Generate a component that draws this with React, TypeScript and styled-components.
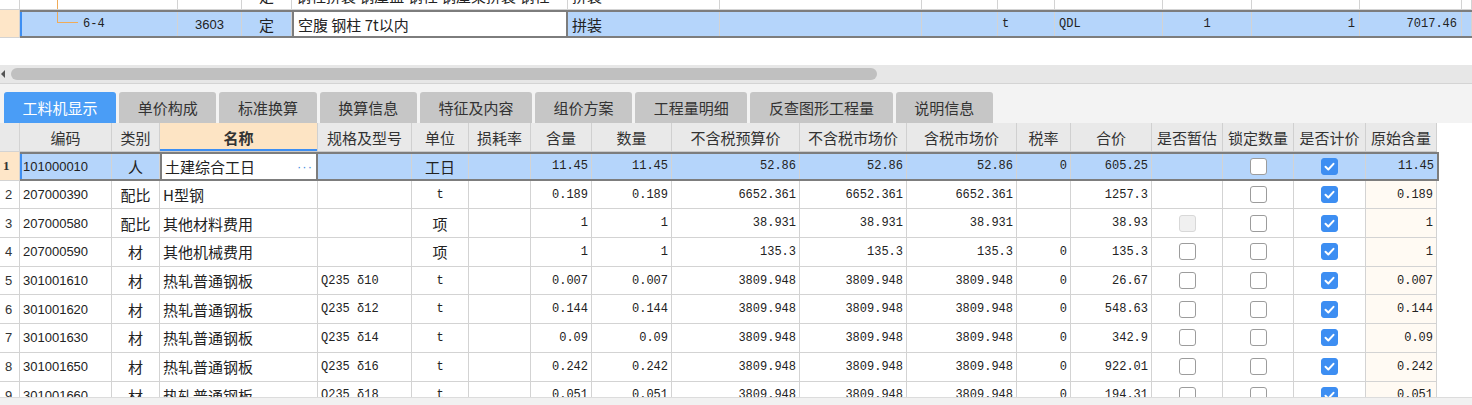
import React from "react";
import styled, { createGlobalStyle } from "styled-components";

const CJK = `"Noto Sans CJK SC", "Microsoft YaHei", sans-serif`;
const MONO = `"Liberation Mono", "Noto Sans CJK SC", monospace`;
const SANS = `"Liberation Sans", Arial, "Noto Sans CJK SC", sans-serif`;

const GRID_LINE = "#d3d3d3";
const SEL_BLUE = "#b5d5fb";
const SEL_BORDER = "#7d7d7d";
const ACCENT = "#3d8ef2";
const PEACH = "#fee6c8";

const GlobalStyle = createGlobalStyle`
  html, body {
    margin: 0;
    padding: 0;
    background: #fff;
    overflow: hidden;
  }
  * {
    box-sizing: border-box;
  }
`;

const Page = styled.div`
  width: 1472px;
  height: 405px;
  display: flex;
  flex-direction: column;
  overflow: hidden;
  background: #fff;
  color: #222;
`;

type Align = "left" | "center" | "right";
type Font = "cjk" | "mono" | "sans";

const fontOf = (f: Font) => (f === "cjk" ? CJK : f === "mono" ? MONO : SANS);
const sizeOf = (f: Font) => (f === "cjk" ? "15px" : f === "mono" ? "12px" : "13px");
const justify = (a: Align) =>
  a === "left" ? "flex-start" : a === "right" ? "flex-end" : "center";

const isAscii = (s: string) => /^[\x00-\x7f]*$/.test(s);

/* ---------- upper grid (list of items) ---------- */

const TOP_WIDTHS = [158, 64, 50, 276, 152, 202, 76, 57, 108, 89, 108, 102, 10];

const TopGrid = styled.div`
  height: 38px;
  display: flex;
  flex-direction: column;
  justify-content: flex-end;
  overflow: hidden;
  flex-shrink: 0;
`;

const TopRow = styled.div`
  display: flex;
  height: 28px;
  flex-shrink: 0;
`;

const RowHead = styled.div<{ $active?: boolean; $header?: boolean }>`
  width: 20px;
  flex-shrink: 0;
  background: ${(p) => (p.$header ? "#e9e9e9" : p.$active ? PEACH : "#fff")};
  border-right: 1px solid ${GRID_LINE};
  border-bottom: 1px solid ${GRID_LINE};
  display: flex;
  align-items: center;
  padding-left: ${(p) => (p.$active ? "3px" : "5px")};
  font-family: ${(p) => (p.$active ? `"Liberation Serif", serif` : SANS)};
  font-weight: ${(p) => (p.$active ? 700 : 400)};
  font-size: 13px;
  color: #333;
`;

const TopCells = styled.div<{ $selected?: boolean }>`
  flex: 1;
  display: grid;
  grid-template-columns: ${TOP_WIDTHS.map((w) => w + "px").join(" ")};
  background: ${(p) => (p.$selected ? SEL_BLUE : "#fff")};
  border-top: ${(p) => (p.$selected ? `2px solid ${SEL_BORDER}` : "none")};
  border-bottom: ${(p) => (p.$selected ? `2px solid ${SEL_BORDER}` : `1px solid ${GRID_LINE}`)};
  box-shadow: ${(p) => (p.$selected ? `inset 2px 0 0 ${ACCENT}` : "none")};
`;

const TopCell = styled.div<{ $align: Align; $font: Font; $editing?: boolean; $indent?: number }>`
  position: relative;
  display: flex;
  align-items: center;
  justify-content: ${(p) => justify(p.$align)};
  padding: 0 4px 0 ${(p) => (p.$indent ?? 4)}px;
  border-right: ${(p) => (p.$editing ? `2px solid ${SEL_BORDER}` : `1px solid ${GRID_LINE}`)};
  border-left: ${(p) => (p.$editing ? `2px solid ${SEL_BORDER}` : "none")};
  background: ${(p) => (p.$editing ? "#fff" : "transparent")};
  font-family: ${(p) => fontOf(p.$font)};
  font-size: ${(p) => sizeOf(p.$font)};
  white-space: nowrap;
  overflow: hidden;
  line-height: 1;
`;

const TreeLine = styled.span<{ $full?: boolean }>`
  position: absolute;
  left: 37px;
  top: 0;
  width: 21px;
  height: ${(p) => (p.$full ? "100%" : "11px")};
  border-left: 1px solid #f0ab58;
  border-bottom: ${(p) => (p.$full ? "none" : "1px solid #f0ab58")};
`;

const topPrev = ["", "", "定", "钢柱拼装 钢屋盖 钢柱 钢屋架拼装 钢柱", "拼装", "", "", "", "", "", "", "", ""];
const topSel = ["6-4", "3603", "定", "空腹 钢柱 7t以内", "拼装", "", "", "t", "QDL", "1", "1", "7017.46", ""];
const topAlign: Align[] = ["left", "center", "center", "left", "left", "left", "left", "left", "left", "center", "right", "right", "left"];

const TopRowView: React.FC<{ values: string[]; selected?: boolean }> = ({ values, selected }) => (
  <TopRow>
    <RowHead $active={selected} />
    <TopCells $selected={selected}>
      {values.map((v, i) => (
        <TopCell
          key={i}
          $align={topAlign[i]}
          $font={i === 1 ? "sans" : isAscii(v) ? "mono" : "cjk"}
          $editing={selected && i === 3}
          $indent={i === 0 ? 63 : undefined}
        >
          {i === 0 && <TreeLine $full={!selected} />}
          {v}
        </TopCell>
      ))}
    </TopCells>
  </TopRow>
);

/* ---------- horizontal scrollbar ---------- */

const ScrollGap = styled.div`
  height: 27px;
  flex-shrink: 0;
`;

const ScrollBar = styled.div`
  height: 18px;
  flex-shrink: 0;
  background: #e7e7e7;
  display: flex;
  align-items: center;
  padding-left: 1px;
  gap: 6px;
`;

const ArrowLeft = styled.span`
  width: 0;
  height: 0;
  border-top: 4px solid transparent;
  border-bottom: 4px solid transparent;
  border-right: 4px solid #555;
`;

const Thumb = styled.div`
  width: 866px;
  height: 12px;
  border-radius: 6px;
  background: #c0c0c0;
`;

/* ---------- tabs ---------- */

const TabBar = styled.div`
  height: 40px;
  flex-shrink: 0;
  background: #f3f3f3;
  border-top: 1px solid #d4d4d4;
  display: flex;
  align-items: flex-end;
  padding-left: 4px;
  gap: 3px;
`;

const Tab = styled.div<{ $active?: boolean }>`
  height: 31px;
  padding: 0 18.6px;
  border-radius: 3px 3px 0 0;
  background: ${(p) => (p.$active ? "#4a9df6" : "#c6c6c6")};
  color: ${(p) => (p.$active ? "#fff" : "#333")};
  font-family: ${CJK};
  font-size: 15px;
  display: flex;
  align-items: center;
  white-space: nowrap;
`;

const TABS = ["工料机显示", "单价构成", "标准换算", "换算信息", "特征及内容", "组价方案", "工程量明细", "反查图形工程量", "说明信息"];

/* ---------- detail grid ---------- */

const DETAIL_WIDTHS = [92, 48, 158, 94, 57, 62, 61, 80, 128, 107, 110, 54, 81, 71, 71, 72, 71];
const DETAIL_TEMPLATE = DETAIL_WIDTHS.map((w) => w + "px").join(" ");

const HEADERS = ["编码", "类别", "名称", "规格及型号", "单位", "损耗率", "含量", "数量", "不含税预算价", "不含税市场价", "含税市场价", "税率", "合价", "是否暂估", "锁定数量", "是否计价", "原始含量"];

const DetailArea = styled.div`
  flex: 1;
  min-height: 0;
  overflow: hidden;
  display: flex;
  flex-direction: column;
`;

const DetailRow = styled.div<{ $header?: boolean }>`
  display: flex;
  height: ${(p) => (p.$header ? "29px" : "28.7px")};
  flex-shrink: 0;
`;

const HeaderCells = styled.div`
  display: grid;
  grid-template-columns: ${DETAIL_TEMPLATE};
  background: #e9e9e9;
  border-bottom: 1px solid #c9c9c9;
`;

const HeaderCell = styled.div<{ $focus?: boolean }>`
  display: flex;
  align-items: center;
  justify-content: center;
  font-family: ${CJK};
  font-size: 15px;
  font-weight: ${(p) => (p.$focus ? 700 : 400)};
  color: #333;
  background: ${(p) => (p.$focus ? "#fde4c4" : "transparent")};
  box-shadow: ${(p) => (p.$focus ? `inset 0 -2px 0 ${ACCENT}` : "none")};
  border-right: 1px solid #d0d0d0;
  white-space: nowrap;
  overflow: hidden;
`;

const DataCells = styled.div<{ $selected?: boolean }>`
  display: grid;
  grid-template-columns: ${DETAIL_TEMPLATE};
  background: ${(p) => (p.$selected ? SEL_BLUE : "#fff")};
  border-top: ${(p) => (p.$selected ? `2px solid ${SEL_BORDER}` : "none")};
  border-bottom: ${(p) => (p.$selected ? `2px solid ${SEL_BORDER}` : `1px solid ${GRID_LINE}`)};
  border-right: ${(p) => (p.$selected ? `2px solid ${SEL_BORDER}` : "none")};
  box-shadow: ${(p) => (p.$selected ? `inset 2px 0 0 ${ACCENT}` : "none")};
`;

const DataCell = styled.div<{ $align: Align; $font: Font; $editing?: boolean; $tint?: boolean }>`
  display: flex;
  align-items: center;
  justify-content: ${(p) => justify(p.$align)};
  padding: 0 3px;
  border-right: ${(p) => (p.$editing ? `2px solid ${SEL_BORDER}` : `1px solid ${GRID_LINE}`)};
  border-left: ${(p) => (p.$editing ? `2px solid ${SEL_BORDER}` : "none")};
  background: ${(p) => (p.$editing ? "#fff" : p.$tint ? "#fffaf3" : "transparent")};
  font-family: ${(p) => fontOf(p.$font)};
  font-size: ${(p) => sizeOf(p.$font)};
  white-space: nowrap;
  overflow: hidden;
  line-height: 1;

  &:last-child {
    border-right: ${(p) => (p.$tint ? `1px solid ${GRID_LINE}` : "none")};
  }
`;

const Ellipsis = styled.span`
  margin-left: auto;
  color: #4a90e2;
  font-family: ${SANS};
  font-size: 13px;
  letter-spacing: 1px;
`;

type Check = "none" | "empty" | "disabled" | "checked";

const Box = styled.span<{ $state: Check }>`
  width: 17px;
  height: 17px;
  border-radius: 3px;
  display: flex;
  align-items: center;
  justify-content: center;
  border: 1px solid
    ${(p) => (p.$state === "checked" ? ACCENT : p.$state === "disabled" ? "#d8d8d8" : "#9c9c9c")};
  background: ${(p) => (p.$state === "checked" ? ACCENT : p.$state === "disabled" ? "#f0f0f0" : "#fff")};
`;

const CheckBox: React.FC<{ state: Check }> = ({ state }) =>
  state === "none" ? null : (
    <Box $state={state}>
      {state === "checked" && (
        <svg width="13" height="13" viewBox="0 0 13 13">
          <polyline points="2.5,6.8 5.3,9.5 10.5,3.8" fill="none" stroke="#fff" strokeWidth="2" strokeLinecap="round" strokeLinejoin="round" />
        </svg>
      )}
    </Box>
  );

const StatusStrip = styled.div`
  height: 8px;
  flex-shrink: 0;
  background: #f1f1f1;
  border-top: 1px solid #dcdcdc;
`;

interface Item {
  code: string;
  kind: string;
  name: string;
  spec: string;
  unit: string;
  loss: string;
  amount: string;
  qty: string;
  budget: string;
  market: string;
  taxMarket: string;
  rate: string;
  total: string;
  est: Check;
  lock: Check;
  priced: Check;
  orig: string;
}

const steel = (n: string, spec: string, amt: string, total: string): Item => ({
  code: n, kind: "材", name: "热轧普通钢板", spec, unit: "t", loss: "",
  amount: amt, qty: amt, budget: "3809.948", market: "3809.948", taxMarket: "3809.948",
  rate: "0", total, est: "empty", lock: "empty", priced: "checked", orig: amt,
});

const ITEMS: Item[] = [
  { code: "101000010", kind: "人", name: "土建综合工日", spec: "", unit: "工日", loss: "", amount: "11.45", qty: "11.45", budget: "52.86", market: "52.86", taxMarket: "52.86", rate: "0", total: "605.25", est: "none", lock: "empty", priced: "checked", orig: "11.45" },
  { code: "207000390", kind: "配比", name: "H型钢", spec: "", unit: "t", loss: "", amount: "0.189", qty: "0.189", budget: "6652.361", market: "6652.361", taxMarket: "6652.361", rate: "", total: "1257.3", est: "none", lock: "empty", priced: "checked", orig: "0.189" },
  { code: "207000580", kind: "配比", name: "其他材料费用", spec: "", unit: "项", loss: "", amount: "1", qty: "1", budget: "38.931", market: "38.931", taxMarket: "38.931", rate: "", total: "38.93", est: "disabled", lock: "empty", priced: "checked", orig: "1" },
  { code: "207000590", kind: "材", name: "其他机械费用", spec: "", unit: "项", loss: "", amount: "1", qty: "1", budget: "135.3", market: "135.3", taxMarket: "135.3", rate: "0", total: "135.3", est: "empty", lock: "empty", priced: "checked", orig: "1" },
  steel("301001610", "Q235  δ10", "0.007", "26.67"),
  steel("301001620", "Q235  δ12", "0.144", "548.63"),
  steel("301001630", "Q235  δ14", "0.09", "342.9"),
  steel("301001650", "Q235  δ16", "0.242", "922.01"),
  steel("301001660", "Q235  δ18", "0.051", "194.31"),
];

const textFont = (v: string, fallback: Font): Font => (isAscii(v) ? fallback : "cjk");

const ItemRow: React.FC<{ item: Item; index: number }> = ({ item, index }) => {
  const selected = index === 0;
  const nums: [string, Font][] = [
    [item.loss, "mono"], [item.amount, "mono"], [item.qty, "mono"], [item.budget, "mono"],
    [item.market, "mono"], [item.taxMarket, "mono"], [item.rate, "mono"], [item.total, "mono"],
  ];
  return (
    <DetailRow>
      <RowHead $active={selected}>{index + 1}</RowHead>
      <DataCells $selected={selected}>
        <DataCell $align="left" $font="sans">{item.code}</DataCell>
        <DataCell $align="center" $font="cjk">{item.kind}</DataCell>
        <DataCell $align="left" $font="cjk" $editing={selected}>
          {item.name}
          {selected && <Ellipsis>···</Ellipsis>}
        </DataCell>
        <DataCell $align="left" $font="mono">{item.spec}</DataCell>
        <DataCell $align="center" $font={textFont(item.unit, "mono")}>{item.unit}</DataCell>
        {nums.map(([v, f], i) => (
          <DataCell key={i} $align="right" $font={f}>{v}</DataCell>
        ))}
        <DataCell $align="center" $font="mono"><CheckBox state={item.est} /></DataCell>
        <DataCell $align="center" $font="mono"><CheckBox state={item.lock} /></DataCell>
        <DataCell $align="center" $font="mono"><CheckBox state={item.priced} /></DataCell>
        <DataCell $align="right" $font="mono" $tint={!selected}>{item.orig}</DataCell>
      </DataCells>
    </DetailRow>
  );
};

export default function App() {
  return (
    <Page>
      <GlobalStyle />
      <TopGrid>
        <TopRowView values={topPrev} />
        <TopRowView values={topSel} selected />
      </TopGrid>
      <ScrollGap />
      <ScrollBar>
        <ArrowLeft />
        <Thumb />
      </ScrollBar>
      <TabBar>
        {TABS.map((t, i) => (
          <Tab key={t} $active={i === 0}>{t}</Tab>
        ))}
      </TabBar>
      <DetailArea>
        <DetailRow $header>
          <RowHead $header />
          <HeaderCells>
            {HEADERS.map((h) => (
              <HeaderCell key={h} $focus={h === "名称"}>{h}</HeaderCell>
            ))}
          </HeaderCells>
        </DetailRow>
        {ITEMS.map((it, i) => (
          <ItemRow key={it.code} item={it} index={i} />
        ))}
      </DetailArea>
      <StatusStrip />
    </Page>
  );
}
